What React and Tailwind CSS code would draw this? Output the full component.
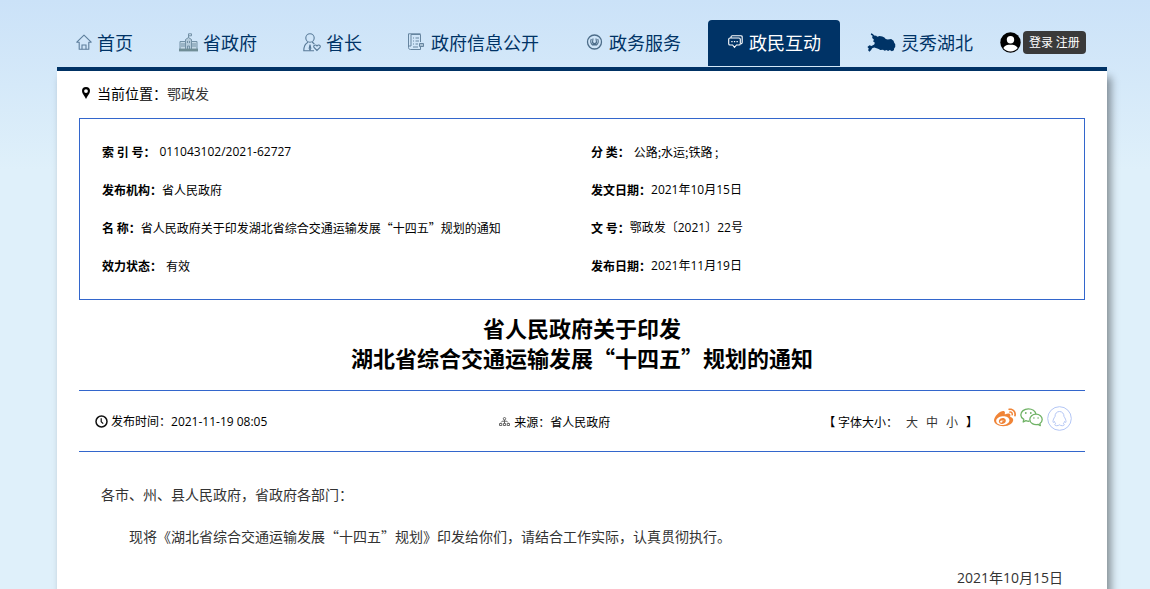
import React, { useState } from "react";
import { FaWeibo } from "react-icons/fa";

const HomeIcon = () => (
  <svg width="16" height="17" viewBox="0 0 16 17" fill="none" stroke="#5d7e9c" strokeWidth="1.1">
    <path d="M.8 8.200 8 1.200l7.200 7h-2.400v7.100H3.200V8.200H.8Z" strokeLinejoin="round" />
    <path d="M6 15.300v-4.300h4v4.300" />
  </svg>
);

const BuildingIcon = () => (
  <svg width="19" height="19" viewBox="0 0 19 19" fill="none" stroke="#7391a6" strokeWidth="1">
    <path d="M9.500 5V.8h3v2h-3" />
    <path d="M6.500 17V6.500l3-2 3 2V17" fill="#b4cbdb" />
    <path d="M1 17V8.500h5.500V17M12.500 17V8.500H18V17" fill="#c3d8e6" />
    <path d="M3 10v4M5 10v4M14 10v4M16 10v4M8.500 8v2M10.500 8v2" />
    <path d="M8.500 17v-4h2v4" />
    <path d="M0 17h19" strokeWidth="2.800" stroke="#6f8d96" />
  </svg>
);

const PersonIcon = () => (
  <svg width="18" height="19" viewBox="0 0 18 19" fill="none" stroke="#587a98" strokeWidth="1.1">
    <circle cx="7" cy="5" r="4.200" />
    <path d="M5 9.300C2.500 10.500.8 13 .8 17.800H11M9 9.300c1 .4 1.800 1 2.300 1.800" />
    <path d="m7 11.500-.8 4L7 17l.8-1.500Z" />
    <path d="m14 17.500-3-3c-1.200-1.800 1.500-3.600 3-1.500 1.500-2.100 4.200-.3 3 1.500Z" />
  </svg>
);

const DocIcon = () => (
  <svg width="18" height="18" viewBox="0 0 18 18" fill="none" stroke="#6685a0" strokeWidth="1">
    <path d="M12.500 16.500H2.500c-1.200 0-2-.8-2-2V13H3V1.500h9.500V9" />
    <path d="M.5 13V.8h12M5 5h1M7.500 5H11M5 8h1M7.500 8H11M5 11h1M7.500 11H10M5 14h5" />
    <path d="M11.500 10.500h4v3h-4Z" fill="#a7bfd2" />
    <path d="M12.500 13.500v3" />
  </svg>
);

const ServiceIcon = () => (
  <svg width="19" height="16" viewBox="-1.500 0 19 16" fill="none" stroke="#4d6d89">
    <circle cx="8" cy="8" r="7" strokeWidth="1.300" />
    <path d="M4.800 5c-1 2.400-.6 4.500 1.200 6h4c1.800-1.500 2.200-3.600 1.200-6M6.500 4.500 6 8.500l2 1.200 2-1.200-.5-4" strokeWidth="1.100" />
    <path d="M6 9h4v2H6Z" fill="#4d6d89" stroke="none" />
  </svg>
);

const ChatIcon = () => (
  <svg width="17" height="14" viewBox="-1 0 17 14" fill="none" stroke="#fff" strokeWidth="1.100">
    <path d="M3 3V2q0-1.300 1.300-1.300h8.400Q14.200.7 14.200 2v5.500q0 1.200-1.300 1.400" />
    <path d="M2 3h9q1.300 0 1.300 1.300v4.400Q12.300 10 11 10H8.500l-2 2.300L4.600 10H2Q.7 10 .7 8.700V4.300Q.7 3 2 3Z" />
    <path d="M3.300 6.600h1.300M5.900 6.600h1.300M8.500 6.600h1.300" strokeWidth="1.400" />
  </svg>
);

const HubeiIcon = () => (
  <svg width="29" height="19" viewBox="0 0 83 56" fill="#003366">
    <path d="M11 1 16 3 20 7 26 8 29 11 36 9 44 10 50 13 54 18 60 19 70 18 77 23 79 29 82 33 82 41 79 45 78 51 72 54 66 50 61 53 56 50 51 52 46 49 38 50 33 47 27 45 20 43 14 45 11 50 6 55 2 51 4 46 0 41 6 36 12 38 20 34 22 29 17 25 19 19 14 15 15 8 10 5Z" />
  </svg>
);

const UserIcon = () => (
  <svg width="21" height="21" viewBox="0 0 21 21">
    <circle cx="10.500" cy="10.500" r="10.200" />
    <circle cx="10.500" cy="7.800" r="3.700" fill="#fff" />
    <path d="M3.300 15.900C5 13.300 7.400 12.800 10.500 12.800s5.500.5 7.200 3.100a9 9 0 0 1-14.400 0Z" fill="#fff" />
  </svg>
);

const PinIcon = () => (
  <svg width="8" height="12" viewBox="0 0 8 12">
    <path d="M4 0a4 4 0 0 1 4 4c0 2.500-2.600 5-4 8C2.600 9 0 6.500 0 4a4 4 0 0 1 4-4Zm0 2.200a1.900 1.900 0 1 0 0 3.800 1.900 1.900 0 0 0 0-3.800Z" fillRule="evenodd" />
  </svg>
);

const ClockIcon = () => (
  <svg width="13" height="13" viewBox="0 0 13 13" fill="none" stroke="#111">
    <circle cx="6.500" cy="6.500" r="5.500" strokeWidth="1.500" />
    <path d="M6.200 3.200v3.500l2 2" strokeWidth="1.200" />
  </svg>
);

const SourceIcon = () => (
  <svg width="11" height="9" viewBox="0 0 11 9" fill="none" stroke="#555" strokeWidth=".9">
    <circle cx="5.500" cy="1.700" r="1.200" />
    <path d="M5.500 3v3M2 5.500l1.200-1.300h4.600L9 5.500" />
    <path d="M.5 8.500V6.500h2.300v2ZM4.400 8.500V6.500h2.200v2ZM8.200 8.500V6.500h2.300v2Z" />
  </svg>
);

const WechatIcon = () => (
  <svg width="23" height="20" viewBox="0 0 23 20" fill="none" stroke="#6fb265" strokeWidth="1.300" strokeLinejoin="round">
    <path d="M9.600 13.200c-1.300.1-2.600-.1-3.700-.6L3.200 14l.6-2.600C1.900 10.200.8 8.700.8 7 .8 3.600 4.200.8 8.400.8c3.800 0 6.900 2.200 7.500 5.200" />
    <path d="M16 6.200c3.500 0 6.200 2.300 6.200 5.200 0 1.700-.9 3.100-2.300 4.100l.4 2.200-2.200-1.300c-4.300 1.100-8.300-1.500-8.300-5 0-2.900 2.700-5.200 6.200-5.200Z" />
    <g fill="#6fb265" stroke="none">
      <circle cx="5.800" cy="5" r=".9" />
      <circle cx="10.800" cy="5" r=".9" />
      <circle cx="13.900" cy="10" r=".8" />
      <circle cx="18.100" cy="10" r=".8" />
    </g>
  </svg>
);

const QqIcon = () => (
  <svg width="25" height="25" viewBox="0 0 25 25" fill="none" stroke="#b3c6f5" strokeWidth="1">
    <circle cx="12.500" cy="12.500" r="11.800" />
    <path d="M8 10.500C8 7.500 9.800 5.500 12.500 5.500S17 7.500 17 10.500c1.200 1.800 2 3.500 2 5.200 0 1-.8.900-1.500-.2-.2.900-.6 1.600-1.200 2.200 1.800.9.900 2-1 2-1.200 0-2.200-.3-2.800-.9-.6.600-1.600.9-2.800.9-1.900 0-2.800-1.100-1-2-.6-.6-1-1.300-1.200-2.200-.7 1.100-1.500 1.200-1.500.2 0-1.700.8-3.400 2-5.200Z" strokeLinejoin="round" />
  </svg>
);

const navItems = [
  { label: "首页", icon: HomeIcon },
  { label: "省政府", icon: BuildingIcon },
  { label: "省长", icon: PersonIcon },
  { label: "政府信息公开", icon: DocIcon },
  { label: "政务服务", icon: ServiceIcon },
  { label: "政民互动", icon: ChatIcon, active: true },
  { label: "灵秀湖北", icon: HubeiIcon },
];

const info = [
  { label: "索 引 号：", value: "011043102/2021-62727", latin: true, gap: true },
  { label: "分 类：", value: "公路;水运;铁路 ;", gap: true },
  { label: "发布机构：", value: "省人民政府" },
  { label: "发文日期：", value: "2021年10月15日", latin: true },
  { label: "名 称：", value: "省人民政府关于印发湖北省综合交通运输发展“十四五”规划的通知" },
  { label: "文 号：", value: "鄂政发〔2021〕22号", latin: true },
  { label: "效力状态：", value: "有效", gap: true },
  { label: "发布日期：", value: "2021年11月19日", latin: true },
];

const sizes = [
  { label: "大", className: "text-lg" },
  { label: "中", className: "text-base" },
  { label: "小", className: "text-sm" },
];

export default function App() {
  const [size, setSize] = useState("text-sm");

  return (
    <div
      lang="zh-CN"
      className="min-h-screen overflow-hidden bg-[#dff0fa] bg-[linear-gradient(#cbe2f8,#dff0fa_170px)] pl-[57px] pr-[43px] pt-5 font-['Noto_Sans_CJK_SC',sans-serif] text-black"
    >
      <nav className="flex h-[51px] items-start whitespace-nowrap border-b-4 border-[#003366]">
        {navItems.map(({ label, icon: Icon, active }) => (
          <a
            key={label}
            href="#"
            className={`mr-2 flex h-[46px] shrink-0 items-center gap-[5px] rounded-t px-[19px] pb-[2px] text-lg ${
              active ? "bg-[#003366] text-white" : "text-[#003366]"
            }`}
          >
            <Icon />
            {label}
          </a>
        ))}
        <div className="flex h-[46px] items-center gap-[2px] pb-[2px]">
          <UserIcon />
          <button type="button" className="h-[23px] rounded bg-[#3a3a3a] px-[6px] text-xs text-white">
            登录 注册
          </button>
        </div>
      </nav>

      <main className="bg-white px-[22px] pb-10 shadow-[4px_6px_8px_rgba(0,0,0,0.4)]">
        <div className="flex h-[47px] items-center gap-[7px] pb-1 pl-[3px] text-sm">
          <PinIcon />
          <p>
            当前位置：
            <a href="#" className="text-[#333]">
              鄂政发
            </a>
          </p>
        </div>

        <dl className="grid grid-cols-2 border border-[#3366cc] py-[14px] pl-[22px] pr-1 text-xs">
          {info.map(({ label, value, latin, gap }) => (
            <div key={label} className="flex leading-[38px]">
              <dt className="font-bold">{label}</dt>
              <dd className={`${latin ? "font-['Open_Sans','Noto_Sans_CJK_SC',sans-serif]" : ""} ${gap ? "pl-1" : ""}`}>
                {value}
              </dd>
            </div>
          ))}
        </dl>

        <h1 className="pb-[18px] pt-3 text-center text-[22px] font-bold leading-[30px]">
          省人民政府关于印发
          <br />
          湖北省综合交通运输发展“十四五”规划的通知
        </h1>

        <div className="flex items-center border-y border-[#3366cc] pl-4 pr-[13px] text-xs leading-[59px]">
          <p className="flex flex-1 items-center gap-[3px]">
            <ClockIcon />
            <span>
              发布时间：
              <span className="font-['Open_Sans',sans-serif]">2021-11-19 08:05</span>
            </span>
          </p>
          <p className="flex flex-1 items-center gap-1 pl-20">
            <SourceIcon />
            来源：省人民政府
          </p>
          <div className="flex items-center">
            <span>【 字体大小：</span>
            <span className="flex gap-2 px-2 text-[#333]">
              {sizes.map((s) => (
                <button key={s.label} type="button" onClick={() => setSize(s.className)}>
                  {s.label}
                </button>
              ))}
            </span>
            <span>】</span>
            <div className="flex items-center gap-1 pb-[6px] pl-4">
              <a href="#" aria-label="微博">
                <FaWeibo className="size-[22px] text-[#f08437]" />
              </a>
              <a href="#" aria-label="微信">
                <WechatIcon />
              </a>
              <a href="#" aria-label="QQ">
                <QqIcon />
              </a>
            </div>
          </div>
        </div>

        <article className={`px-[22px] pt-[21px] text-[#333] ${size}`}>
          <p className="leading-[42px]">各市、州、县人民政府，省政府各部门：</p>
          <p className="indent-[2em] leading-[42px]">
            现将《湖北省综合交通运输发展“十四五”规划》印发给你们，请结合工作实际，认真贯彻执行。
          </p>
          <p className="text-right font-['Open_Sans','Noto_Sans_CJK_SC',sans-serif] leading-[42px]">2021年10月15日</p>
        </article>
      </main>
    </div>
  );
}
